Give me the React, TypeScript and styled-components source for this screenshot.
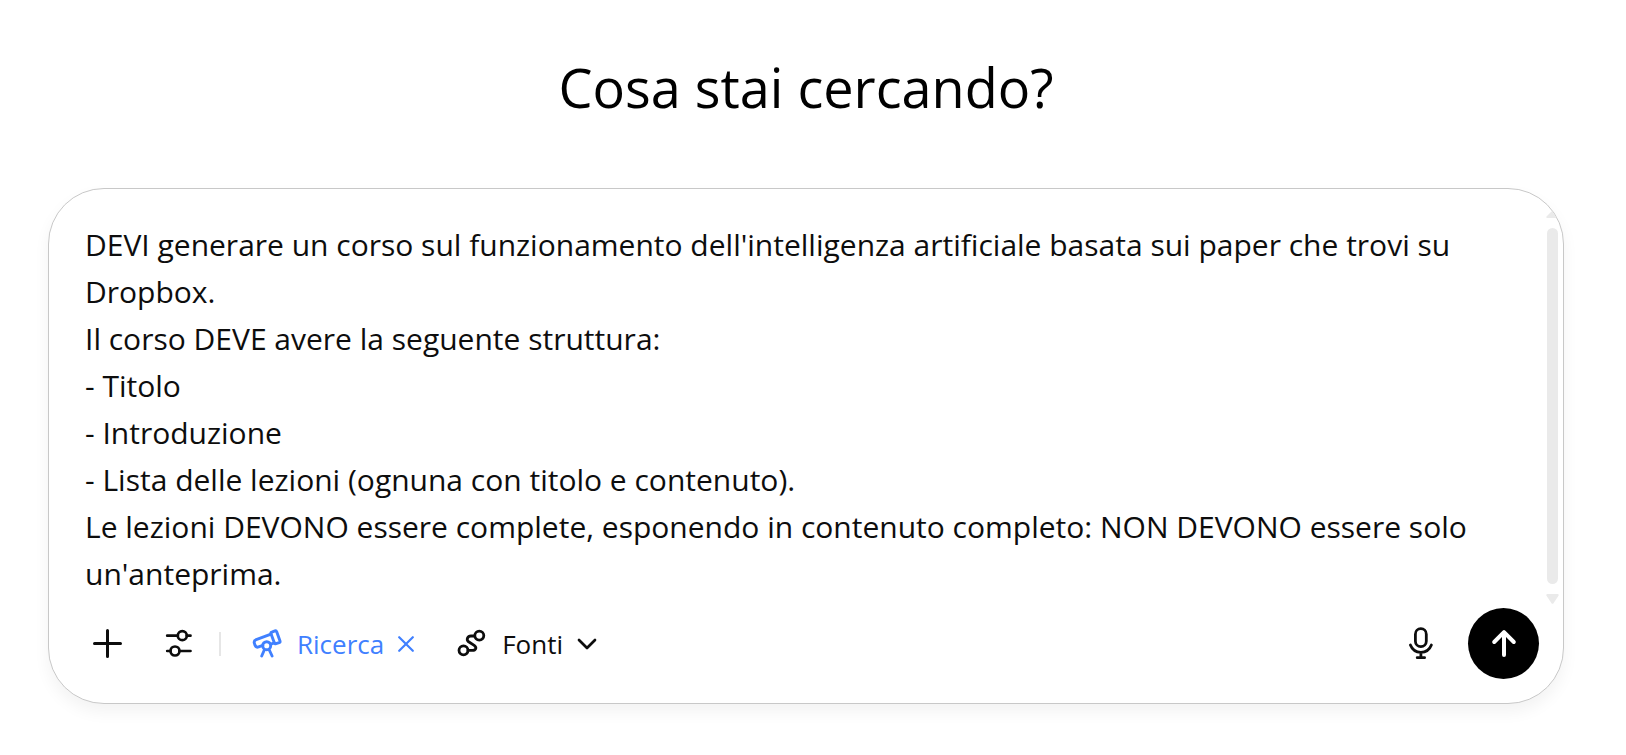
import React, { useState } from "react";
import styled, { createGlobalStyle } from "styled-components";

const GlobalStyle = createGlobalStyle`
  * { box-sizing: border-box; }
  body {
    margin: 0;
    background: #fff;
    color: #0d0d0d;
    font-family: "Open Sans", "Noto Sans", sans-serif;
  }
  button, textarea { font: inherit; color: inherit; }
`;

const Page = styled.main`
  padding: 47px 62px 48px 48px;
`;

const Title = styled.h1`
  margin: 0 0 61px;
  font-size: 54px;
  line-height: 80px;
  font-weight: 400;
  text-align: center;
  color: #000;
`;

const Composer = styled.form`
  overflow: hidden;
  border: 1px solid #c8c8c8;
  border-radius: 56px;
  background: #fff;
  box-shadow: 0 8px 16px rgba(0, 0, 0, 0.05);
`;

const Editor = styled.div`
  display: flex;
  justify-content: space-between;
  padding: 22px 4px 0 36px;
`;

const Prompt = styled.textarea`
  flex: 1;
  margin: 10px 0 0;
  padding: 0;
  border: 0;
  outline: 0;
  resize: none;
  overflow: hidden;
  background: transparent;
  font-size: 30px;
  line-height: 47px;
`;

const Scrollbar = styled.div`
  display: flex;
  flex-direction: column;
  align-items: center;
  gap: 10px;
  width: 13px;
  color: #eaeaea;
`;

const Thumb = styled.div`
  width: 11px;
  height: 356px;
  border-radius: 6px;
  background: currentColor;
`;

const Toolbar = styled.div`
  display: flex;
  align-items: center;
  padding: 4px 24px 24px 23px;
`;

const Button = styled.button`
  display: flex;
  align-items: center;
  justify-content: center;
  height: 71px;
  padding: 0;
  border: 0;
  background: transparent;
  cursor: pointer;
`;

const IconButton = styled(Button)`
  width: 71px;
`;

const SendButton = styled(IconButton)`
  margin-left: 12px;
  border-radius: 50%;
  background: #000;
  color: #fff;
`;

const LabelButton = styled(Button)<{ $active?: boolean }>`
  gap: 14px;
  margin-left: ${(p) => (p.$active ? 30 : 42)}px;
  font-size: 26px;
  line-height: 36px;
  color: ${(p) => (p.$active ? "#4080ff" : "#0d0d0d")};
`;

const Divider = styled.span`
  width: 2px;
  height: 24px;
  margin-left: 5px;
  background: #e6e6e6;
`;

const Spacer = styled.span`
  flex: 1;
`;

const Glyph = styled.svg`
  display: block;
  flex: none;
  fill: none;
  stroke: currentColor;
  stroke-linecap: round;
  stroke-linejoin: round;
`;

const Triangle = styled.svg`
  display: block;
  fill: currentColor;
`;

const initialText = `DEVI generare un corso sul funzionamento dell'intelligenza artificiale basata sui paper che trovi su Dropbox.
Il corso DEVE avere la seguente struttura:
- Titolo
- Introduzione
- Lista delle lezioni (ognuna con titolo e contenuto).
Le lezioni DEVONO essere complete, esponendo in contenuto completo: NON DEVONO essere solo un'anteprima.`;

export default function App() {
  const [text, setText] = useState(initialText);
  return (
    <>
      <GlobalStyle />
      <Page>
        <Title>Cosa stai cercando?</Title>
        <Composer onSubmit={(e) => e.preventDefault()}>
          <Editor>
            <Prompt
              aria-label="Messaggio"
              rows={8}
              spellCheck={false}
              value={text}
              onChange={(e) => setText(e.target.value)}
            />
            <Scrollbar aria-hidden="true">
              <Triangle width="13" height="7" viewBox="0 0 13 7">
                <path d="M5.5.5Q6.5-.5 7.5.5L12.500 5.500Q13 7 11.500 7H1.500Q0 7 .5 5.500Z" />
              </Triangle>
              <Thumb />
              <Triangle width="13" height="10" viewBox="0 0 13 10">
                <path d="M5.5 9.200Q6.500 10.400 7.500 9.200L12.500 1.800Q13.200.2 11.500 0H1.500Q-.2.2.5 1.800Z" />
              </Triangle>
            </Scrollbar>
          </Editor>
          <Toolbar>
            <IconButton type="button" aria-label="Aggiungi">
              <Glyph width="31" height="31" viewBox="0 0 31 31" strokeWidth="3">
                <path d="M15.5 2.500v26M2.500 15.500h26" />
              </Glyph>
            </IconButton>
            <IconButton type="button" aria-label="Strumenti">
              <Glyph width="32" height="32" viewBox="0 0 32 32" strokeWidth="2.7">
                <path d="M4.200 7.700h10.600M23.800 7.700H27.500M4.200 23h3.300M16.500 23h11" />
                <circle cx="19.3" cy="7.7" r="4.5" />
                <circle cx="12" cy="23" r="4.5" />
              </Glyph>
            </IconButton>
            <Divider />
            <LabelButton type="button" $active>
              <Glyph width="32" height="32" viewBox="0 0 32 32" strokeWidth="2.9">
                <path d="M20.800 4.200 24 2.900q1.200-.4 1.700.8l3.300 9.200q.4 1.300-.8 1.700l-3.200 1.100q-1.200.4-1.600-.8L20 5.800q-.4-1.200.8-1.600Z" />
                <path d="M20 6.100 5.200 11.600Q2.500 12.700 3.400 15.400l.7 2q1 2.400 3.500 1.500l4.200-1.500M19.800 16.100l3.600-1.200" />
                <circle cx="15.7" cy="17.7" r="4" />
                <path d="m13.300 22-2.600 6M18.300 22l2.800 6" />
              </Glyph>
              Ricerca
              <Glyph width="16" height="16" viewBox="0 0 16 16" strokeWidth="2.2">
                <path d="m1.200 1.200 13.600 13.600M14.800 1.200 1.200 14.800" />
              </Glyph>
            </LabelButton>
            <LabelButton type="button" aria-haspopup="menu">
              <Glyph width="32" height="32" viewBox="0 0 32 32" strokeWidth="2.8">
                <circle cx="7.5" cy="22.3" r="4.5" />
                <circle cx="23.3" cy="7.6" r="4.5" />
                <path d="M18.600 8H15c-3.500 0-5 3.800-2.400 5.800l5.600 3.600c3 2.200 1.600 5-1.800 5H12" />
              </Glyph>
              Fonti
              <Glyph width="20" height="12" viewBox="0 0 20 12" strokeWidth="2.7">
                <path d="m2 2 8 8 8-8" />
              </Glyph>
            </LabelButton>
            <Spacer />
            <IconButton type="button" aria-label="Dettatura">
              <Glyph width="34" height="36" viewBox="0 0 34 36" strokeWidth="2.8">
                <rect x="11.4" y="2.7" width="10.9" height="18" rx="5.45" />
                <path d="M6.400 19c1.800 4.600 5.800 7.300 10.500 7.300s8.700-2.700 10.500-7.300M16.900 26.500v5M13.200 31.700h7.400" />
              </Glyph>
            </IconButton>
            <SendButton type="submit" aria-label="Invia">
              <Glyph width="32" height="32" viewBox="0 0 32 32" strokeWidth="4">
                <path d="M16 4.200V27M6.200 14 16 4.200 25.800 14" />
              </Glyph>
            </SendButton>
          </Toolbar>
        </Composer>
      </Page>
    </>
  );
}
